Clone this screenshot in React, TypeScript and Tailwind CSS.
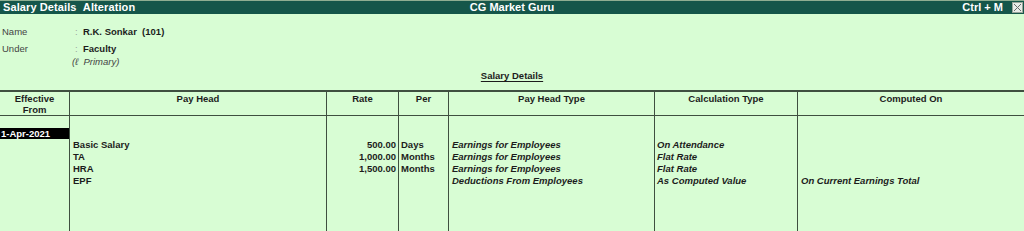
import React from 'react';

const cols = 'grid grid-cols-[69px_257px_72px_50px_206px_143px_1fr]';

const rows = [
  { head: 'Basic Salary', rate: '500.00', per: 'Days', type: 'Earnings for Employees', calc: 'On Attendance', on: '' },
  { head: 'TA', rate: '1,000.00', per: 'Months', type: 'Earnings for Employees', calc: 'Flat Rate', on: '' },
  { head: 'HRA', rate: '1,500.00', per: 'Months', type: 'Earnings for Employees', calc: 'Flat Rate', on: '' },
  { head: 'EPF', rate: '', per: '', type: 'Deductions From Employees', calc: 'As Computed Value', on: 'On Current Earnings Total' },
];

export default function App() {
  return (
    <div className="h-[231px] w-[1024px] overflow-hidden bg-[#d8fdd4] font-['Liberation_Sans',Arial,sans-serif] text-[9.5px] leading-[12px] text-[#1c1c1c] flex flex-col">
      {/* Title bar */}
      <div className="h-[14px] shrink-0 border-t border-[#8fae92] bg-[#15564a] flex items-center text-white font-bold text-[11px] leading-[13px] relative">
        <span className="pl-[3px] tracking-[0.1px]">Salary Details&nbsp;&nbsp;Alteration</span>
        <span className="absolute left-1/2 -translate-x-1/2 top-0">CG Market Guru</span>
        <span className="ml-auto mr-[9px]">Ctrl + M</span>
        <span className="w-[11px] h-[11px] mr-[1px] bg-[#e8ece8] border border-[#9aa59a] flex items-center justify-center">
          <svg width="9" height="9" viewBox="0 0 9 9">
            <path d="M1 1L8 8M8 1L1 8" stroke="#6b6b6b" strokeWidth="1" />
          </svg>
        </span>
      </div>

      {/* Master info */}
      <div className="pt-[12px] pl-[2px]">
        <div className="flex h-[12px]">
          <span className="w-[73px] text-[#444]">Name</span>
          <span className="w-[8px] text-[#9aa59a]">:</span>
          <span className="font-bold">R.K. Sonkar&nbsp;&nbsp;(101)</span>
        </div>
        <div className="flex h-[12px] mt-[5px]">
          <span className="w-[73px] text-[#444]">Under</span>
          <span className="w-[8px] text-[#9aa59a]">:</span>
          <span className="font-bold">Faculty</span>
        </div>
        <div className="pl-[70px] h-[12px] mt-[1px] italic text-[#444]">(ℓ&nbsp;&nbsp;Primary)</div>
      </div>

      <div className="mt-[2px] h-[12px] flex justify-center">
        <span className="font-bold underline underline-offset-[2px]">Salary Details</span>
      </div>

      {/* Table */}
      <div className="mt-[8px] flex-1 flex flex-col border-t-2 border-[#3f4f40]">
        <div className={`${cols} h-[24px] border-b border-[#3f4f40] font-bold`}>
          <div className="text-center pt-[1px] leading-[11px]">Effective<br />From</div>
          <div className="text-center pt-[1px] border-l border-[#3f4f40]">Pay Head</div>
          <div className="text-center pt-[1px] border-l border-[#3f4f40]">Rate</div>
          <div className="text-center pt-[1px] border-l border-[#3f4f40]">Per</div>
          <div className="text-center pt-[1px] border-l border-[#3f4f40]">Pay Head Type</div>
          <div className="text-center pt-[1px] border-l border-[#3f4f40]">Calculation Type</div>
          <div className="text-center pt-[1px] border-l border-[#3f4f40]">Computed On</div>
        </div>
        <div className={`${cols} flex-1`}>
          <div className="pt-[12px]">
            <div className="h-[11px] bg-black text-white font-bold leading-[11px] pl-[1px]">1-Apr-2021</div>
          </div>
          <div className="border-l border-[#3f4f40] pt-[23px] pl-[3px] font-bold">
            {rows.map((r) => <div key={r.head} className="h-[12px]">{r.head}</div>)}
          </div>
          <div className="border-l border-[#3f4f40] pt-[23px] pr-[2px] text-right font-bold">
            {rows.map((r) => <div key={r.head} className="h-[12px]">{r.rate}</div>)}
          </div>
          <div className="border-l border-[#3f4f40] pt-[23px] pl-[2px] font-bold">
            {rows.map((r) => <div key={r.head} className="h-[12px]">{r.per}</div>)}
          </div>
          <div className="border-l border-[#3f4f40] pt-[23px] pl-[3px] font-bold italic">
            {rows.map((r) => <div key={r.head} className="h-[12px]">{r.type}</div>)}
          </div>
          <div className="border-l border-[#3f4f40] pt-[23px] pl-[2px] font-bold italic">
            {rows.map((r) => <div key={r.head} className="h-[12px]">{r.calc}</div>)}
          </div>
          <div className="border-l border-[#3f4f40] pt-[23px] pl-[3px] font-bold italic">
            {rows.map((r) => <div key={r.head} className="h-[12px]">{r.on}</div>)}
          </div>
        </div>
      </div>
    </div>
  );
}
